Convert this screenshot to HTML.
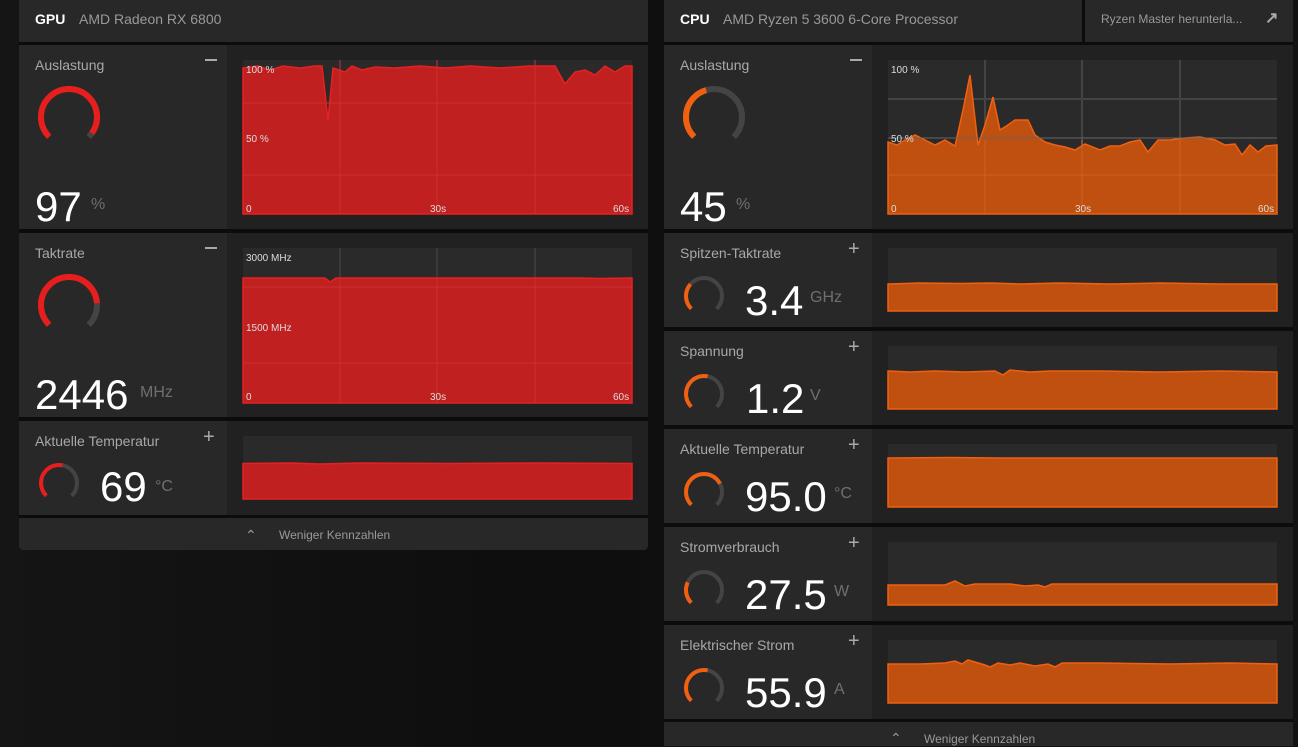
<!DOCTYPE html>
<html><head><meta charset="utf-8"><style>
*{margin:0;padding:0;box-sizing:border-box}
body{width:1298px;height:746px;overflow:hidden;background:#121212;font-family:"Liberation Sans",sans-serif;position:relative}
.a{position:absolute}
.hd{background:#282828}
.lc{background:#282828}
.rc{background:#212121}
.t{position:absolute;color:#a8a8a8;font-size:14px}
.n{position:absolute;color:#fff;font-size:42px;line-height:42px}
.u{position:absolute;color:#6f6f6f;font-size:16px}
.pm{position:absolute;color:#aaa;font-size:20px;line-height:20px}
svg{position:absolute;left:0;top:0}
.lbl{font-size:10px;fill:#ddd;font-family:"Liberation Sans",sans-serif}
</style></head><body>
<div class="a" style="left:0;top:0;width:1298px;height:746px;background:linear-gradient(90deg,#151515,#0e0e0e 40%,#121212)"></div>

<!-- GPU panel -->
<div class="a" style="left:19px;top:0;width:629px;height:550px;background:#0c0c0c;border-radius:0 0 4px 4px"></div>
<div class="a hd" style="left:19px;top:0;width:629px;height:42px"></div>
<div class="a" style="left:35px;top:11px;color:#fff;font-size:14px;font-weight:bold">GPU</div>
<div class="a" style="left:79px;top:11px;color:#999;font-size:14px">AMD Radeon RX 6800</div>

<div class="a lc" style="left:19px;top:45px;width:208px;height:184px"></div>
<div class="a rc" style="left:227px;top:45px;width:421px;height:184px"></div>
<div class="a lc" style="left:19px;top:233px;width:208px;height:184px"></div>
<div class="a rc" style="left:227px;top:233px;width:421px;height:184px"></div>
<div class="a lc" style="left:19px;top:421px;width:208px;height:94px"></div>
<div class="a rc" style="left:227px;top:421px;width:421px;height:94px"></div>
<div class="a" style="left:19px;top:518px;width:629px;height:32px;background:#282828;border-radius:0 0 4px 4px"></div>
<div class="a" style="left:245px;top:527px;color:#999;font-size:14px">&#8963;</div>
<div class="a" style="left:279px;top:528px;color:#999;font-size:12px">Weniger Kennzahlen</div>

<div class="t" style="left:35px;top:57px">Auslastung</div>
<div class="a" style="left:205px;top:59px;width:12px;height:2px;background:#aaa"></div>
<div class="n" style="left:35px;top:186px">97</div>
<div class="u" style="left:91px;top:196px">%</div>

<div class="t" style="left:35px;top:245px">Taktrate</div>
<div class="a" style="left:205px;top:247px;width:12px;height:2px;background:#aaa"></div>
<div class="n" style="left:35px;top:374px">2446</div>
<div class="u" style="left:140px;top:384px">MHz</div>

<div class="t" style="left:35px;top:433px">Aktuelle Temperatur</div>
<div class="pm" style="left:203px;top:427px">+</div>
<div class="n" style="left:100px;top:466px">69</div>
<div class="u" style="left:155px;top:478px">°C</div>

<!-- CPU panel -->
<div class="a" style="left:664px;top:0;width:629px;height:746px;background:#0c0c0c"></div>
<div class="a hd" style="left:664px;top:0;width:418px;height:42px"></div>
<div class="a hd" style="left:1085px;top:0;width:208px;height:42px"></div>
<div class="a" style="left:680px;top:11px;color:#fff;font-size:14px;font-weight:bold">CPU</div>
<div class="a" style="left:723px;top:11px;color:#999;font-size:14px">AMD Ryzen 5 3600 6-Core Processor</div>
<div class="a" style="left:1101px;top:12px;color:#999;font-size:12px">Ryzen Master herunterla...</div>
<div class="a" style="left:1265px;top:8px;color:#aaa;font-size:16px;font-weight:bold">&#8599;</div>

<div class="a lc" style="left:664px;top:45px;width:208px;height:184px"></div>
<div class="a rc" style="left:872px;top:45px;width:421px;height:184px"></div>
<div class="t" style="left:680px;top:57px">Auslastung</div>
<div class="a" style="left:850px;top:59px;width:12px;height:2px;background:#aaa"></div>
<div class="n" style="left:680px;top:186px">45</div>
<div class="u" style="left:736px;top:196px">%</div>

<div class="a lc" style="left:664px;top:233px;width:208px;height:94px"></div><div class="a rc" style="left:872px;top:233px;width:421px;height:94px"></div>
<div class="a lc" style="left:664px;top:331px;width:208px;height:94px"></div><div class="a rc" style="left:872px;top:331px;width:421px;height:94px"></div>
<div class="a lc" style="left:664px;top:429px;width:208px;height:94px"></div><div class="a rc" style="left:872px;top:429px;width:421px;height:94px"></div>
<div class="a lc" style="left:664px;top:527px;width:208px;height:94px"></div><div class="a rc" style="left:872px;top:527px;width:421px;height:94px"></div>
<div class="a lc" style="left:664px;top:625px;width:208px;height:94px"></div><div class="a rc" style="left:872px;top:625px;width:421px;height:94px"></div>
<div class="a" style="left:664px;top:722px;width:629px;height:24px;background:#282828"></div>
<div class="a" style="left:890px;top:730px;color:#999;font-size:14px">&#8963;</div>
<div class="a" style="left:924px;top:732px;color:#999;font-size:12px">Weniger Kennzahlen</div>

<div class="t" style="left:680px;top:245px">Spitzen-Taktrate</div><div class="pm" style="left:848px;top:239px">+</div>
<div class="n" style="left:745px;top:280px">3.4</div><div class="u" style="left:810px;top:289px">GHz</div>
<div class="t" style="left:680px;top:343px">Spannung</div><div class="pm" style="left:848px;top:337px">+</div>
<div class="n" style="left:746px;top:378px">1.2</div><div class="u" style="left:810px;top:387px">V</div>
<div class="t" style="left:680px;top:441px">Aktuelle Temperatur</div><div class="pm" style="left:848px;top:435px">+</div>
<div class="n" style="left:745px;top:476px">95.0</div><div class="u" style="left:834px;top:485px">°C</div>
<div class="t" style="left:680px;top:539px">Stromverbrauch</div><div class="pm" style="left:848px;top:533px">+</div>
<div class="n" style="left:745px;top:574px">27.5</div><div class="u" style="left:834px;top:583px">W</div>
<div class="t" style="left:680px;top:637px">Elektrischer Strom</div><div class="pm" style="left:848px;top:631px">+</div>
<div class="n" style="left:745px;top:672px">55.9</div><div class="u" style="left:834px;top:681px">A</div>

<svg width="1298" height="746" viewBox="0 0 1298 746">
<!-- gauges: big r28 C=175.9 vis=131.9 ; small r18 C=113.1 vis=84.8 -->
<g fill="none">
 <g transform="translate(69,117) rotate(135)"><circle r="28" stroke="#444" stroke-width="6" stroke-dasharray="131.9 200"/><circle r="28" stroke="#e81e1e" stroke-width="6" stroke-dasharray="127 200"/></g>
 <g transform="translate(69,305) rotate(135)"><circle r="28" stroke="#444" stroke-width="6" stroke-dasharray="131.9 200"/><circle r="28" stroke="#e81e1e" stroke-width="6" stroke-dasharray="108 200"/></g>
 <g transform="translate(59,483) rotate(135)"><circle r="18" stroke="#444" stroke-width="4" stroke-dasharray="84.8 200"/><circle r="18" stroke="#e81e1e" stroke-width="4" stroke-dasharray="46 200"/></g>
 <g transform="translate(714,117) rotate(135)"><circle r="28" stroke="#444" stroke-width="6" stroke-dasharray="131.9 200"/><circle r="28" stroke="#f06010" stroke-width="6" stroke-dasharray="58 200"/></g>
 <g transform="translate(704,296) rotate(135)"><circle r="18" stroke="#444" stroke-width="4" stroke-dasharray="84.8 200"/><circle r="18" stroke="#f06010" stroke-width="4" stroke-dasharray="27 200"/></g>
 <g transform="translate(704,394) rotate(135)"><circle r="18" stroke="#444" stroke-width="4" stroke-dasharray="84.8 200"/><circle r="18" stroke="#f06010" stroke-width="4" stroke-dasharray="46 200"/></g>
 <g transform="translate(704,492) rotate(135)"><circle r="18" stroke="#444" stroke-width="4" stroke-dasharray="84.8 200"/><circle r="18" stroke="#f06010" stroke-width="4" stroke-dasharray="62 200"/></g>
 <g transform="translate(704,590) rotate(135)"><circle r="18" stroke="#444" stroke-width="4" stroke-dasharray="84.8 200"/><circle r="18" stroke="#f06010" stroke-width="4" stroke-dasharray="22 200"/></g>
 <g transform="translate(704,688) rotate(135)"><circle r="18" stroke="#444" stroke-width="4" stroke-dasharray="84.8 200"/><circle r="18" stroke="#f06010" stroke-width="4" stroke-dasharray="46 200"/></g>
</g>

<!-- GPU chart 1 -->
<rect x="243" y="60" width="389" height="154" fill="#2a2a2a"/>
<path d="M243,214 L243,68 L258,66 L270,70 L283,66 L300,68 L315,66 L322,66 L328,120 L333,68 L345,72 L352,66 L362,70 L375,67 L395,68 L420,66 L445,68 L470,66 L500,68 L530,66 L555,66 L565,84 L575,72 L585,70 L595,75 L605,66 L615,72 L625,66 L632,66 L632,214 Z" fill="#c02020" stroke="#e82020" stroke-width="1.5"/>
<g stroke="#cc3030" stroke-width="1"><line x1="243" y1="103" x2="632" y2="103"/><line x1="243" y1="175" x2="632" y2="175"/><line x1="340" y1="60" x2="340" y2="214"/><line x1="437" y1="60" x2="437" y2="214"/><line x1="535" y1="60" x2="535" y2="214"/></g>
<text class="lbl" x="246" y="73">100 %</text><text class="lbl" x="246" y="142">50 %</text>
<text class="lbl" x="246" y="212">0</text><text class="lbl" x="430" y="212">30s</text><text class="lbl" x="613" y="212">60s</text>

<!-- GPU chart 2 -->
<rect x="243" y="248" width="389" height="155" fill="#2a2a2a"/>
<g stroke="#3a3a3a" stroke-width="2"><line x1="340" y1="248" x2="340" y2="278"/><line x1="437" y1="248" x2="437" y2="278"/><line x1="535" y1="248" x2="535" y2="278"/></g>
<path d="M243,403 L243,278 L325,278 L330,282 L336,278 L580,278 L600,278.5 L632,278 L632,403 Z" fill="#c02020" stroke="#e82020" stroke-width="1.5"/>
<g stroke="#cc3030" stroke-width="1"><line x1="243" y1="287" x2="632" y2="287"/><line x1="243" y1="363" x2="632" y2="363"/><line x1="340" y1="278" x2="340" y2="403"/><line x1="437" y1="278" x2="437" y2="403"/><line x1="535" y1="278" x2="535" y2="403"/></g>
<text class="lbl" x="246" y="261">3000 MHz</text><text class="lbl" x="246" y="331">1500 MHz</text>
<text class="lbl" x="246" y="400">0</text><text class="lbl" x="430" y="400">30s</text><text class="lbl" x="613" y="400">60s</text>

<!-- GPU chart 3 -->
<rect x="243" y="436" width="389" height="63" fill="#2a2a2a"/>
<path d="M243,499 L243,463.5 L290,463 L320,464 L360,463 L450,463.5 L540,463 L632,463.5 L632,499 Z" fill="#c02020" stroke="#e82020" stroke-width="1.5"/>

<!-- CPU chart 1 -->
<rect x="888" y="60" width="389" height="154" fill="#2a2a2a"/>
<g stroke="#444" stroke-width="2"><line x1="888" y1="99" x2="1277" y2="99"/><line x1="985" y1="60" x2="985" y2="214"/><line x1="1082" y1="60" x2="1082" y2="214"/><line x1="1180" y1="60" x2="1180" y2="214"/></g>
<path d="M888,214 L888,142 L897,145 L905,140 L915,135 L925,140 L935,145 L945,140 L955,146 L963,110 L970,75 L978,145 L985,125 L993,97 L1000,130 L1008,125 L1015,120 L1028,120 L1035,135 L1045,142 L1055,145 L1065,147 L1075,150 L1085,144 L1100,150 L1110,146 L1120,146 L1130,142 L1140,140 L1148,152 L1158,140 L1170,140 L1185,138 L1200,137 L1215,140 L1225,145 L1235,144 L1242,155 L1250,145 L1258,152 L1266,146 L1277,145 L1277,214 Z" fill="#c05010" stroke="#f06010" stroke-width="1.5"/>
<g stroke="#cf6020" stroke-width="1"><line x1="888" y1="175" x2="1277" y2="175"/><line x1="985" y1="140" x2="985" y2="214"/><line x1="1082" y1="140" x2="1082" y2="214"/><line x1="1180" y1="140" x2="1180" y2="214"/></g>
<line x1="888" y1="138" x2="1277" y2="138" stroke="#666" stroke-width="1"/>
<text class="lbl" x="891" y="73">100 %</text><text class="lbl" x="891" y="142">50 %</text>
<text class="lbl" x="891" y="212">0</text><text class="lbl" x="1075" y="212">30s</text><text class="lbl" x="1258" y="212">60s</text>

<!-- CPU small charts -->
<g fill="#c05010" stroke="#f06010" stroke-width="1.5">
<rect x="888" y="248" width="389" height="63" fill="#2a2a2a" stroke="none"/>
<path d="M888,311 L888,284 L920,283 L960,283.5 L990,283 L1020,284 L1060,283 L1110,284 L1160,283 L1220,284 L1277,284 L1277,311 Z"/>
<rect x="888" y="346" width="389" height="63" fill="#2a2a2a" stroke="none"/>
<path d="M888,409 L888,371 L910,372 L935,371 L965,372 L995,371 L1003,375 L1010,370 L1030,372 L1050,371 L1100,371 L1160,372 L1220,371 L1277,372 L1277,409 Z"/>
<rect x="888" y="444" width="389" height="63" fill="#2a2a2a" stroke="none"/>
<path d="M888,507 L888,458 L950,457.5 L1000,458 L1277,458 L1277,507 Z"/>
<rect x="888" y="542" width="389" height="63" fill="#2a2a2a" stroke="none"/>
<path d="M888,605 L888,585 L945,585 L955,581 L965,586 L975,584 L1010,584 L1025,586 L1038,585 L1045,587 L1052,584 L1100,584 L1200,584 L1277,584 L1277,605 Z"/>
<rect x="888" y="640" width="389" height="63" fill="#2a2a2a" stroke="none"/>
<path d="M888,703 L888,664 L920,664 L945,663 L955,661 L962,664 L968,660 L985,665 L990,667 L998,663 L1010,665 L1020,663 L1035,666 L1048,664 L1055,667 L1062,663 L1100,663 L1170,664 L1230,663 L1277,664 L1277,703 Z"/>
</g>
</svg>
</body></html>
